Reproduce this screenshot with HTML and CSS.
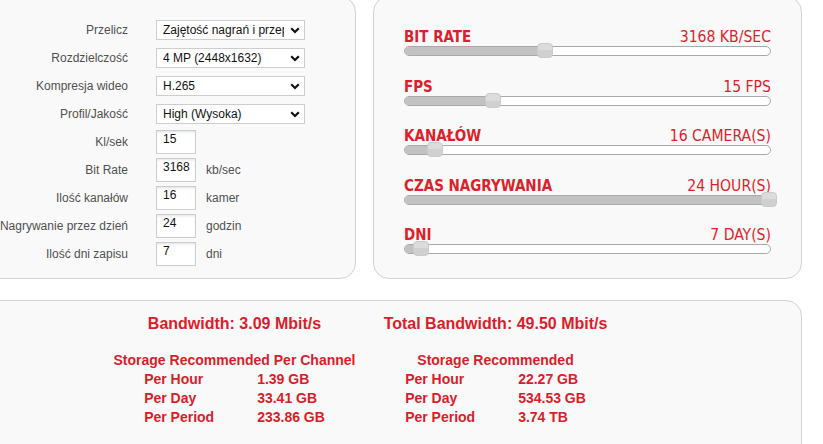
FILE: index.html
```html
<!DOCTYPE html>
<html lang="pl">
<head>
<meta charset="utf-8">
<title>Kalkulator dysku</title>
<link rel="stylesheet" href="styles.css">
</head>
<body>
<div class="page">
  <div class="top">
    <div class="panel form-panel">
      <div class="form-grid">
        <label class="lbl">Przelicz</label>
        <div class="select"><span class="select-text">Zajętość nagrań i przepustowość</span><svg class="chev" width="10" height="7" viewBox="0 0 10 7"><polyline points="1.2,1.2 5,5 8.8,1.2" fill="none" stroke="#111" stroke-width="2.2"/></svg></div>
        <span></span>

        <label class="lbl">Rozdzielczość</label>
        <div class="select"><span class="select-text">4 MP (2448x1632)</span><svg class="chev" width="10" height="7" viewBox="0 0 10 7"><polyline points="1.2,1.2 5,5 8.8,1.2" fill="none" stroke="#111" stroke-width="2.2"/></svg></div>
        <span></span>

        <label class="lbl">Kompresja wideo</label>
        <div class="select"><span class="select-text">H.265</span><svg class="chev" width="10" height="7" viewBox="0 0 10 7"><polyline points="1.2,1.2 5,5 8.8,1.2" fill="none" stroke="#111" stroke-width="2.2"/></svg></div>
        <span></span>

        <label class="lbl">Profil/Jakość</label>
        <div class="select"><span class="select-text">High (Wysoka)</span><svg class="chev" width="10" height="7" viewBox="0 0 10 7"><polyline points="1.2,1.2 5,5 8.8,1.2" fill="none" stroke="#111" stroke-width="2.2"/></svg></div>
        <span></span>

        <label class="lbl">Kl/sek</label>
        <div class="num-row"><input class="num" type="text" value="15"></div>
        <span></span>

        <label class="lbl">Bit Rate</label>
        <div class="num-row"><input class="num" type="text" value="3168"><span class="unit">kb/sec</span></div>
        <span></span>

        <label class="lbl">Ilość kanałów</label>
        <div class="num-row"><input class="num" type="text" value="16"><span class="unit">kamer</span></div>
        <span></span>

        <label class="lbl">Nagrywanie przez dzień</label>
        <div class="num-row"><input class="num" type="text" value="24"><span class="unit">godzin</span></div>
        <span></span>

        <label class="lbl">Ilość dni zapisu</label>
        <div class="num-row"><input class="num" type="text" value="7"><span class="unit">dni</span></div>
        <span></span>
      </div>
    </div>

    <div class="panel slider-panel">
      <div class="slider">
        <div class="slider-head"><span class="s-name">BIT RATE</span><span class="s-val">3168 KB/SEC</span></div>
        <div class="track"><div class="fill" style="width:38.4%"></div><div class="thumb" style="left:38.4%"></div></div>
      </div>
      <div class="slider">
        <div class="slider-head"><span class="s-name">FPS</span><span class="s-val">15 FPS</span></div>
        <div class="track"><div class="fill" style="width:24%"></div><div class="thumb" style="left:24%"></div></div>
      </div>
      <div class="slider">
        <div class="slider-head"><span class="s-name">KANAŁÓW</span><span class="s-val">16 CAMERA(S)</span></div>
        <div class="track"><div class="fill" style="width:8.2%"></div><div class="thumb" style="left:8.2%"></div></div>
      </div>
      <div class="slider">
        <div class="slider-head"><span class="s-name">CZAS NAGRYWANIA</span><span class="s-val">24 HOUR(S)</span></div>
        <div class="track"><div class="fill" style="width:99.6%"></div><div class="thumb" style="left:99.6%"></div></div>
      </div>
      <div class="slider">
        <div class="slider-head"><span class="s-name">DNI</span><span class="s-val">7 DAY(S)</span></div>
        <div class="track"><div class="fill" style="width:4.5%"></div><div class="thumb" style="left:4.5%"></div></div>
      </div>
    </div>
  </div>

  <div class="panel result-panel">
    <div class="results">
      <div class="res-col">
        <div class="bw">Bandwidth: 3.09 Mbit/s</div>
        <div class="st-head">Storage Recommended Per Channel</div>
        <div class="st-table">
          <span>Per Hour</span><span>1.39 GB</span>
          <span>Per Day</span><span>33.41 GB</span>
          <span>Per Period</span><span>233.86 GB</span>
        </div>
      </div>
      <div class="res-col">
        <div class="bw">Total Bandwidth: 49.50 Mbit/s</div>
        <div class="st-head">Storage Recommended</div>
        <div class="st-table">
          <span>Per Hour</span><span>22.27 GB</span>
          <span>Per Day</span><span>534.53 GB</span>
          <span>Per Period</span><span>3.74 TB</span>
        </div>
      </div>
    </div>
  </div>
</div>
</body>
</html>
```

FILE: styles.css
```css
html, body {
  margin: 0;
  padding: 0;
  background: #fff;
  overflow: hidden;
}

body {
  font-family: "Liberation Sans", Arial, sans-serif;
  font-size: 12px;
  color: #444;
}

.page {
  margin: -4px 0 0 -24px;
  width: 826px;
  display: flex;
  flex-direction: column;
  gap: 21px;
}

.top {
  display: flex;
  gap: 17px;
}

.panel {
  box-sizing: border-box;
  background: #f9f9f9;
  border: 1px solid #d2d2d2;
  border-radius: 16px;
}

/* ---------- form ---------- */
.form-panel {
  width: 380px;
  height: 283px;
  padding: 19px 0 0 0;
}

.form-grid {
  display: grid;
  grid-template-columns: 151px 149px 1fr;
  grid-auto-rows: 28px;
  column-gap: 28px;
  align-items: center;
}

.lbl {
  text-align: right;
  color: #505050;
  white-space: nowrap;
}

.select {
  box-sizing: border-box;
  height: 20px;
  width: 149px;
  display: flex;
  align-items: center;
  background: #fff;
  border: 1px solid #cdcdcd;
  padding: 0 4px 0 6px;
  color: #111;
}

.select-text {
  flex: 1;
  overflow: hidden;
  white-space: nowrap;
  line-height: 18px;
}

.chev {
  flex: none;
  margin-left: 6px;
}

.num-row {
  display: flex;
  align-items: center;
  gap: 10px;
}

.num {
  box-sizing: border-box;
  width: 40px;
  height: 24px;
  margin: 0;
  padding: 0 0 6px 6px;
  border: 1px solid #cdcdcd;
  background: #fff;
  box-shadow: inset 0 2px 3px -1px rgba(0, 0, 0, 0.12);
  font-family: "Liberation Sans", Arial, sans-serif;
  font-size: 12px;
  color: #111;
  outline: none;
}

.unit {
  color: #505050;
}

/* ---------- sliders ---------- */
.slider-panel {
  width: 429px;
  height: 283px;
  padding: 32px 0 0 30px;
}

.slider {
  width: 367px;
  height: 27px;
  margin-bottom: 22.5px;
}

.slider-head {
  display: flex;
  justify-content: space-between;
  align-items: baseline;
  height: 17px;
  line-height: 17px;
  color: #dc1f2c;
  font-family: "Liberation Sans Narrow", "DejaVu Sans Condensed", "Liberation Sans", sans-serif;
}

.s-name {
  font-weight: bold;
  font-size: 15px;
}

.s-val {
  font-size: 15.6px;
}

.track {
  position: relative;
  box-sizing: border-box;
  height: 10px;
  border: 1px solid #a9a9a9;
  border-radius: 5px;
  background: #fff;
}

.fill {
  height: 100%;
  background: #c2c2c2;
  border-radius: 4px 0 0 4px;
}

.thumb {
  position: absolute;
  top: -4px;
  width: 16px;
  height: 15px;
  margin-left: -8px;
  box-sizing: border-box;
  border: 1px solid #cacaca;
  border-radius: 4px;
  background: linear-gradient(#dcdcdc 0, #dcdcdc 50%, #d0d0d0 50%, #d0d0d0 100%);
}

/* ---------- results ---------- */
.result-panel {
  width: 826px;
  height: 180px;
  padding: 14px 0 0 127px;
}

.results {
  display: grid;
  grid-template-columns: 261px 261px;
  color: #d91d2a;
  font-weight: bold;
}

.res-col {
  display: flex;
  flex-direction: column;
  align-items: center;
}

.bw {
  font-size: 16px;
  line-height: 18px;
}

.st-head {
  margin-top: 18px;
  font-size: 14px;
  line-height: 19px;
}

.st-table {
  display: grid;
  grid-template-columns: 113px max-content;
  font-size: 14px;
  line-height: 19px;
}
```
